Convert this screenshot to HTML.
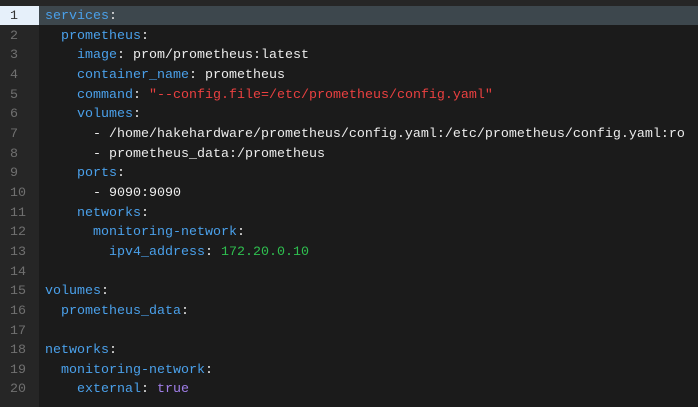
<!DOCTYPE html>
<html><head><style>
html,body{margin:0;padding:0;width:698px;height:407px;overflow:hidden;background:#1b1b1b;}
.top{position:absolute;left:0;top:0;width:698px;height:6px;background:#262626;}
.gut{position:absolute;left:0;top:6px;width:39px;height:401px;background:#262626;}
.hl{position:absolute;left:39px;top:6px;width:659px;height:19px;background:#3d474d;}
.hlg{position:absolute;left:0;top:6px;width:39px;height:19px;background:#e6f0fa;}
pre{margin:0;position:absolute;top:7px;font-family:"Liberation Mono",monospace;font-size:13.33px;line-height:19.65px;}
.nums{left:0;width:28px;color:#707070;padding-left:10px;}
.code{left:45px;color:#ececec;}
.k{color:#4aa0ea}.s{color:#e94040}.n{color:#2fbf4f}.b{color:#a07ee8}
.n1{color:#333}
</style></head><body>
<div class="top"></div><div class="gut"></div><div class="hlg"></div><div class="hl"></div>
<pre class="nums"><span class="n1">1</span>
2
3
4
5
6
7
8
9
10
11
12
13
14
15
16
17
18
19
20</pre>
<pre class="code"><span class="k">services</span>:
  <span class="k">prometheus</span>:
    <span class="k">image</span>: prom/prometheus:latest
    <span class="k">container_name</span>: prometheus
    <span class="k">command</span>: <span class="s">"--config.file=/etc/prometheus/config.yaml"</span>
    <span class="k">volumes</span>:
      - /home/hakehardware/prometheus/config.yaml:/etc/prometheus/config.yaml:ro
      - prometheus_data:/prometheus
    <span class="k">ports</span>:
      - 9090:9090
    <span class="k">networks</span>:
      <span class="k">monitoring-network</span>:
        <span class="k">ipv4_address</span>: <span class="n">172.20.0.10</span>

<span class="k">volumes</span>:
  <span class="k">prometheus_data</span>:

<span class="k">networks</span>:
  <span class="k">monitoring-network</span>:
    <span class="k">external</span>: <span class="b">true</span></pre>
</body></html>
